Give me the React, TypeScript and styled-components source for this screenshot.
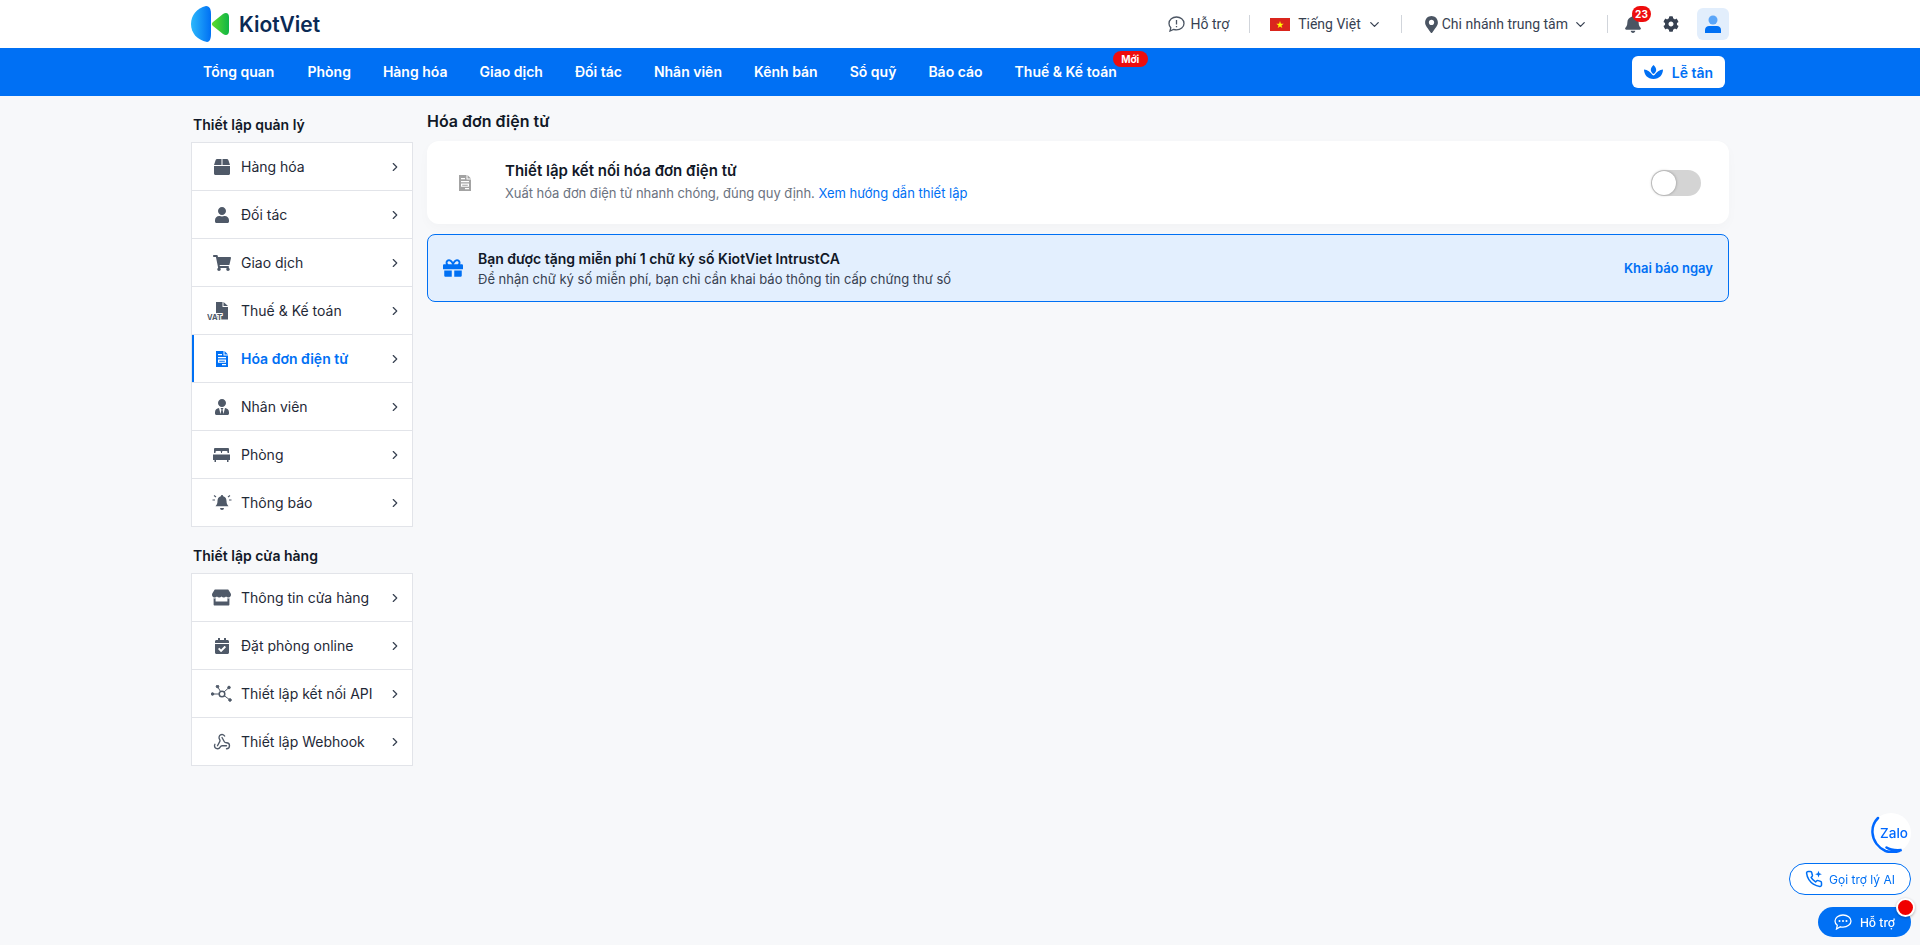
import React from "react";
import styled, { createGlobalStyle } from "styled-components";
import { ChevronDown, ChevronRight, Webhook } from "lucide-react";
import { FaBox, FaUser, FaShoppingCart, FaUserTie, FaStore, FaCalendarCheck, FaBell, FaCog, FaMapMarkerAlt, FaGift } from "react-icons/fa";

const Global = createGlobalStyle`
  * { box-sizing: border-box; }
  html, body { margin: 0; padding: 0; background: #f7f8fa; }
  body { font-family: Inter, "Noto Sans", sans-serif; color: #1f2937; font-size: 14px; }
`;

const Shell = styled.div`
  width: 1538px;
  margin: 0 auto;
  display: flex;
  align-items: center;
`;
const TopBar = styled.header`
  height: 48px;
  background: #fff;
`;
const TopInner = styled(Shell)`
  height: 48px;
  justify-content: space-between;
`;
const Logo = styled.div`
  display: flex;
  align-items: center;
  gap: 10px;
  font-size: 21px;
  font-weight: 600;
  color: #0b2a55;
`;
const TopTools = styled.div`
  display: flex;
  align-items: center;
  font-family: Roboto, sans-serif;
  font-size: 14px;
  color: #374151;
`;
const Tool = styled.div<{ $gap?: number }>`
  display: flex;
  align-items: center;
  gap: ${(p) => p.$gap ?? 6}px;
`;
const Divider = styled.span<{ $l: number; $r: number }>`
  width: 1px;
  height: 18px;
  background: #d1d5db;
  margin: 0 ${(p) => p.$r}px 0 ${(p) => p.$l}px;
`;
const Pin = styled(FaMapMarkerAlt)`
  color: #4b5563;
  margin-right: -3px;
`;
const BellWrap = styled.div`
  position: relative;
  display: flex;
  width: 18px;
  margin-right: 21px;
  color: #4b5563;
`;
const Count = styled.span`
  position: absolute;
  left: 8px;
  top: -9px;
  min-width: 19px;
  height: 16px;
  border-radius: 8px;
  background: #ee0d0d;
  color: #fff;
  font: 700 10px/16px Inter, sans-serif;
  text-align: center;
`;
const Avatar = styled.div`
  width: 32px;
  height: 32px;
  margin-left: 18px;
  border-radius: 6px;
  background: #e2eefc;
  display: flex;
  align-items: center;
  justify-content: center;
`;
const NavBar = styled.nav`
  height: 48px;
  background: #0070f4;
`;
const NavInner = styled(Shell)`
  height: 48px;
  justify-content: space-between;
  padding-left: 12px;
  padding-right: 4px;
`;
const NavList = styled.div`
  display: flex;
  gap: 32px;
`;
const NavItem = styled.a`
  position: relative;
  color: #fff;
  font-size: 14px;
  font-weight: 600;
  line-height: 20px;
  &:first-child { margin-right: 1px; }
`;
const NewBadge = styled.span`
  position: absolute;
  right: -31px;
  top: -11px;
  height: 16px;
  width: 35px;
  border-radius: 8px;
  background: #ee0d0d;
  color: #fff;
  font-size: 10px;
  font-weight: 700;
  line-height: 16px;
  text-align: center;
`;
const FrontDesk = styled.button`
  width: 93px;
  height: 32px;
  border: 0;
  border-radius: 6px;
  background: #fff;
  color: #0070f4;
  font: 600 14px Inter, sans-serif;
  display: flex;
  align-items: center;
  justify-content: center;
  gap: 9px;
`;
const Body = styled(Shell)`
  align-items: flex-start;
  gap: 14px;
`;
const Side = styled.aside`
  width: 222px;
  flex: none;
`;
const SideTitle = styled.div<{ $top: number }>`
  margin: ${(p) => p.$top}px 0 7px 2px;
  height: 20px;
  font-size: 14px;
  font-weight: 600;
  line-height: 20px;
  color: #111827;
`;
const SideList = styled.div`
  background: #fff;
  border: 1px solid #e2e4e9;
  border-bottom: 0;
`;
const Row = styled.div<{ $active?: boolean }>`
  height: 48px;
  display: flex;
  align-items: center;
  border-bottom: 1px solid #e2e4e9;
  padding-right: 10px;
  color: ${(p) => (p.$active ? "#0070f4" : "#1f2937")};
  font-weight: ${(p) => (p.$active ? 600 : 400)};
  box-shadow: ${(p) => (p.$active ? "inset 2px 0 0 #0070f4" : "none")};
  svg.arrow { color: #374151; }
`;
const RowIcon = styled.span<{ $active?: boolean }>`
  width: 49px;
  padding-left: 10px;
  flex: none;
  height: 20px;
  display: flex;
  align-items: center;
  justify-content: center;
  color: ${(p) => (p.$active ? "#0070f4" : "#4f5968")};
`;
const RowLabel = styled.span`
  flex: 1;
`;
const Main = styled.main`
  flex: 1;
  min-width: 0;
`;
const MainTitle = styled.h1`
  margin: 15px 0 10px;
  font-size: 16px;
  font-weight: 600;
  line-height: 20px;
  color: #111827;
`;
const Card = styled.section`
  height: 83px;
  background: #fff;
  border-radius: 12px;
  box-shadow: 0 4px 12px rgba(0, 0, 0, 0.025);
  display: flex;
  align-items: center;
  padding: 0 28px 0 26px;
`;
const CardIcon = styled.span`
  width: 52px;
  padding-left: 6px;
  display: flex;
  color: #a3a3a3;
`;
const CardText = styled.div`
  flex: 1;
  padding-bottom: 2px;
`;
const CardTitle = styled.div`
  font-size: 15px;
  font-weight: 600;
  line-height: 20px;
  color: #111827;
  margin-bottom: 3px;
`;
const CardSub = styled.div`
  font-size: 13px;
  line-height: 18px;
  color: #6b7280;
  letter-spacing: -0.04px;
  a { color: #0070f4; letter-spacing: 0; }
`;
const Toggle = styled.div`
  width: 50px;
  height: 26px;
  border-radius: 13px;
  background: #d4d4d4;
  padding: 1px;
  &::before {
    content: "";
    display: block;
    width: 24px;
    height: 24px;
    border-radius: 50%;
    background: #fff;
    box-shadow: 0 0 3px rgba(0, 0, 0, 0.35);
  }
`;
const Banner = styled.section`
  height: 68px;
  margin-top: 10px;
  border: 1px solid #0070f4;
  border-radius: 8px;
  background: #e3effe;
  display: flex;
  align-items: center;
  padding: 0 15px;
`;
const GiftIcon = styled.span`
  width: 35px;
  display: flex;
  color: #0070f4;
`;
const BannerText = styled.div`
  flex: 1;
  padding-top: 1px;
`;
const BannerTitle = styled.div`
  font-size: 14px;
  font-weight: 600;
  line-height: 20px;
  color: #111827;
`;
const BannerSub = styled.div`
  font-size: 13px;
  line-height: 20px;
  color: #374151;
`;
const BannerAction = styled.a`
  font-size: 13px;
  font-weight: 600;
  color: #0070f4;
`;
const Floating = styled.div`
  position: fixed;
  right: 9px;
  bottom: 8px;
  display: flex;
  flex-direction: column;
  align-items: flex-end;
`;
const Zalo = styled.div`
  position: relative;
  width: 40px;
  height: 40px;
  margin-bottom: 10px;
  padding-left: 6px;
  border-radius: 50%;
  background: #fff;
  color: #0068ff;
  font: 500 13.500px/40px Inter, sans-serif;
  text-align: center;
  svg { position: absolute; left: 0; top: 0; }
`;
const AiPill = styled.div`
  width: 122px;
  height: 32px;
  border: 1px solid #0070f4;
  border-radius: 16px;
  background: #fff;
  color: #0070f4;
  font-size: 12px;
  display: flex;
  align-items: center;
  justify-content: center;
  gap: 6px;
  margin-bottom: 12px;
`;
const HelpPill = styled.div`
  position: relative;
  width: 93px;
  height: 30px;
  border-radius: 15px;
  background: #0070f4;
  color: #fff;
  font-size: 12px;
  font-weight: 500;
  display: flex;
  align-items: center;
  justify-content: center;
  gap: 8px;
`;
const RedDot = styled.span`
  position: absolute;
  right: -4px;
  top: -9px;
  width: 19px;
  height: 19px;
  border-radius: 50%;
  background: #f00000;
  border: 2px solid #fff;
  box-shadow: 0 1px 3px rgba(0, 0, 0, 0.3);
`;
const FlagBox = styled.svg`
  margin-right: 2px;
`;

const InvoiceGlyph = ({ size = 16 }: { size?: number }) => (
  <svg width={size * 0.75} height={size} viewBox="0 0 12 16" fill="currentColor">
    <path fillRule="evenodd" d="M0 0h7.500v4.500H12V16H0zM8.500 0 12 3.500H8.500zM2 3v1.200h4V3zM2 6v1.200h8V6zM2 8.600v3.200h8V8.600zM3.200 9.800h5.600v.9H3.200zM6 13v1.200h4V13z" />
  </svg>
);
const VatIcon = () => (
  <svg width="29" height="20" viewBox="0 0 29 20" fill="currentColor">
    <path d="M9 1h6.500v5H21v12.500h-12zM16.500 1 21 5h-4.500z" />
    <text x="0" y="19" fontFamily="Inter, sans-serif" fontSize="7.500" fontWeight="700" stroke="#fff" strokeWidth="2" paintOrder="stroke">VAT</text>
  </svg>
);
const BedIcon = () => (
  <svg width="17" height="14" viewBox="0 0 17 14" fill="currentColor">
    <path d="M2 0h13a1 1 0 0 1 1 1v4h-1.500V4a1 1 0 0 0-1-1H10a1 1 0 0 0-1 1v1H8V4a1 1 0 0 0-1-1H3.500a1 1 0 0 0-1 1v1H1V1a1 1 0 0 1 1-1zM0 6.500h17V12h-1.500v2H14v-2H3v2H1.500v-2H0z" />
  </svg>
);
const AlarmIcon = () => (
  <svg width="20" height="18" viewBox="0 0 20 18" fill="currentColor" stroke="none">
    <path d="M10 1a1.200 1.200 0 0 1 1.200 1.200c2.400.5 3.300 2.500 3.300 4.800 0 3 1 4 2 5.300H3.500c1-1.300 2-2.300 2-5.300 0-2.300.9-4.300 3.300-4.800A1.200 1.200 0 0 1 10 1zM8 14h4a2 2 0 0 1-4 0z" />
    <path d="M.5 6h2.500M17 6h2.500M2 1.500l2 1.500M18 1.500l-2 1.500" stroke="currentColor" strokeWidth="1.100" />
  </svg>
);
const ApiIcon = () => (
  <svg width="21" height="17" viewBox="0 0 21 17" fill="currentColor" stroke="currentColor">
    <circle cx="11" cy="9" r="2.800" fill="none" strokeWidth="1.500" />
    <circle cx="1.500" cy="9" r="1.300" />
    <circle cx="6.500" cy="1.500" r="1.300" />
    <circle cx="18" cy="2.500" r="1.300" />
    <circle cx="19" cy="15" r="1.300" />
    <path d="M1.500 9H8M6.500 1.500 9.500 6.500M18 2.500 13 7M19 15l-6-4.500" strokeWidth="1" />
  </svg>
);
const LotusIcon = () => (
  <svg width="19" height="14" viewBox="0 0 19 14" fill="#0070f4">
    <path d="M9.500 0c1.800 1.500 2.700 3.200 2.700 5 0 1.300-.9 3-2.700 4-1.800-1-2.700-2.700-2.700-4 0-1.800.9-3.500 2.700-5zM0 4.500c3.500 0 6.500 2.500 8.500 5.500l1 .5 1-.5c2-3 5-5.500 8.500-5.500 0 5-3.500 9.500-9.500 9.500S0 9.500 0 4.500z" />
  </svg>
);
const LogoMark = () => (
  <svg width="38" height="38" viewBox="0 0 38 38">
    <defs>
      <linearGradient id="lb" x1="0" x2="1" y1="0" y2="0">
        <stop offset="0" stopColor="#2cb8fb" />
        <stop offset="1" stopColor="#0070f4" />
      </linearGradient>
      <linearGradient id="lg" x1="0" x2="1" y1="0" y2="0">
        <stop offset="0" stopColor="#5fdc2d" />
        <stop offset="1" stopColor="#10b545" />
      </linearGradient>
    </defs>
    <path d="M15 1C6 3 0 10 0 19c0 9 6 16 16 18 3 0 4-4 4-8V9c0-4-1-8-5-8z" fill="url(#lb)" />
    <path d="M22 17l10-8c3-2 6-1 6 3v14c0 4-3 5-6 3l-10-8c-1.500-1-1.500-3 0-4z" fill="url(#lg)" />
  </svg>
);
const VnFlag = () => (
  <FlagBox width="20" height="13" viewBox="0 0 20 13">
    <rect width="20" height="13" fill="#da251d" />
    <path d="M10 3l.9 2.700h2.800l-2.300 1.700.9 2.700L10 8.400l-2.300 1.700.9-2.700-2.300-1.700h2.800z" fill="#ff0" />
  </FlagBox>
);
const SupportGlyph = () => (
  <svg width="17" height="16" viewBox="0 0 17 16" fill="none" stroke="#4b5563" strokeWidth="1.300">
    <path d="M8.500 1C4.500 1 1 3.700 1 7.500c0 1.700.7 3.100 1.800 4.200L2 15l3.500-1.600c.9.300 2 .5 3 .5 4 0 7.500-2.700 7.500-6.400S12.500 1 8.500 1z" />
    <path d="M8.500 4v4.500M8.500 10v1.300" />
  </svg>
);
const UserAvatar = () => (
  <svg width="16" height="18" viewBox="0 0 16 18" fill="#0070f4">
    <circle cx="8" cy="5" r="4.500" fill="#5aa5f8" />
    <path d="M0 18v-3c0-2.500 2-4 4-4h8c2 0 4 1.500 4 4v3z" />
  </svg>
);
const ZaloRing = () => (
  <svg width="40" height="40" viewBox="0 0 40 40" fill="none" stroke="#0068ff" strokeWidth="2.500">
    <path d="M7 5C3 9 1 14 1.500 20c.5 8 6 15 13 18 6 2 12 1 16-1-6 .5-12-.5-15-2.500" strokeLinecap="round" />
  </svg>
);
const PhoneSpark = () => (
  <svg width="18" height="18" viewBox="0 0 24 24" fill="none" stroke="currentColor" strokeWidth="2" strokeLinecap="round" strokeLinejoin="round">
    <path d="M22 16.920v3a2 2 0 0 1-2.180 2 19.790 19.790 0 0 1-8.630-3.070 19.500 19.500 0 0 1-6-6 19.790 19.790 0 0 1-3.070-8.670A2 2 0 0 1 4.110 2h3a2 2 0 0 1 2 1.720 12.840 12.840 0 0 0 .7 2.810 2 2 0 0 1-.45 2.110L8.090 9.910a16 16 0 0 0 6 6l1.270-1.270a2 2 0 0 1 2.110-.45 12.840 12.840 0 0 0 2.810.7A2 2 0 0 1 22 16.920z" />
    <path d="M18 1l1.200 3.300L22.500 5.500l-3.300 1.200L18 10l-1.200-3.300L13.500 5.500l3.300-1.200z" fill="currentColor" stroke="none" />
  </svg>
);
const ChatDots = () => (
  <svg width="18" height="16" viewBox="0 0 18 16" fill="none" stroke="#fff" strokeWidth="1.300">
    <path d="M9 1C4.600 1 1 3.600 1 7c0 1.700.9 3.200 2.300 4.300L2.500 15l3.900-2.200c.8.200 1.700.3 2.600.3 4.400 0 8-2.700 8-6.100S13.400 1 9 1z" />
    <circle cx="5.500" cy="7" r="1" fill="#fff" stroke="none" />
    <circle cx="9" cy="7" r="1" fill="#fff" stroke="none" />
    <circle cx="12.500" cy="7" r="1" fill="#fff" stroke="none" />
  </svg>
);

const chevron = <ChevronRight className="arrow" size={14} strokeWidth={2} />;
const manage: [React.ReactNode, string, boolean?][] = [
  [<FaBox size={16} />, "Hàng hóa"],
  [<FaUser size={16} />, "Đối tác"],
  [<FaShoppingCart size={18} />, "Giao dịch"],
  [<VatIcon />, "Thuế & Kế toán"],
  [<InvoiceGlyph />, "Hóa đơn điện tử", true],
  [<FaUserTie size={16} />, "Nhân viên"],
  [<BedIcon />, "Phòng"],
  [<AlarmIcon />, "Thông báo"],
];
const store: [React.ReactNode, string][] = [
  [<FaStore size={19} />, "Thông tin cửa hàng"],
  [<FaCalendarCheck size={16} />, "Đặt phòng online"],
  [<ApiIcon />, "Thiết lập kết nối API"],
  [<Webhook size={18} strokeWidth={1.800} />, "Thiết lập Webhook"],
];
const navs = ["Tổng quan", "Phòng", "Hàng hóa", "Giao dịch", "Đối tác", "Nhân viên", "Kênh bán", "Sổ quỹ", "Báo cáo"];

export default function App() {
  return (
    <>
      <Global />
      <TopBar>
        <TopInner>
          <Logo>
            <LogoMark />
            KiotViet
          </Logo>
          <TopTools>
            <Tool>
              <SupportGlyph />
              Hỗ trợ
            </Tool>
            <Divider $l={20} $r={20} />
            <Tool $gap={6}>
              <VnFlag />
              Tiếng Việt
              <ChevronDown size={15} strokeWidth={2} />
            </Tool>
            <Divider $l={19} $r={21} />
            <Tool $gap={5}>
              <Pin size={17} />
              Chi nhánh trung tâm
              <ChevronDown size={15} strokeWidth={2} />
            </Tool>
            <Divider $l={19} $r={16} />
            <BellWrap>
              <FaBell size={18} />
              <Count>23</Count>
            </BellWrap>
            <FaCog size={16} color="#374151" />
            <Avatar>
              <UserAvatar />
            </Avatar>
          </TopTools>
        </TopInner>
      </TopBar>
      <NavBar>
        <NavInner>
          <NavList>
            {navs.map((n) => (
              <NavItem key={n}>{n}</NavItem>
            ))}
            <NavItem>
              Thuế &amp; Kế toán
              <NewBadge>Mới</NewBadge>
            </NavItem>
          </NavList>
          <FrontDesk>
            <LotusIcon />
            Lễ tân
          </FrontDesk>
        </NavInner>
      </NavBar>
      <Body>
        <Side>
          <SideTitle $top={19}>Thiết lập quản lý</SideTitle>
          <SideList>
            {manage.map(([icon, label, active]) => (
              <Row key={label} $active={active}>
                <RowIcon $active={active}>{icon}</RowIcon>
                <RowLabel>{label}</RowLabel>
                {chevron}
              </Row>
            ))}
          </SideList>
          <SideTitle $top={19}>Thiết lập cửa hàng</SideTitle>
          <SideList>
            {store.map(([icon, label]) => (
              <Row key={label}>
                <RowIcon>{icon}</RowIcon>
                <RowLabel>{label}</RowLabel>
                {chevron}
              </Row>
            ))}
          </SideList>
        </Side>
        <Main>
          <MainTitle>Hóa đơn điện tử</MainTitle>
          <Card>
            <CardIcon>
              <InvoiceGlyph />
            </CardIcon>
            <CardText>
              <CardTitle>Thiết lập kết nối hóa đơn điện tử</CardTitle>
              <CardSub>
                Xuất hóa đơn điện tử nhanh chóng, đúng quy định. <a>Xem hướng dẫn thiết lập</a>
              </CardSub>
            </CardText>
            <Toggle />
          </Card>
          <Banner>
            <GiftIcon>
              <FaGift size={20} />
            </GiftIcon>
            <BannerText>
              <BannerTitle>Bạn được tặng miễn phí 1 chữ ký số KiotViet IntrustCA</BannerTitle>
              <BannerSub>Để nhận chữ ký số miễn phí, bạn chỉ cần khai báo thông tin cấp chứng thư số</BannerSub>
            </BannerText>
            <BannerAction>Khai báo ngay</BannerAction>
          </Banner>
        </Main>
      </Body>
      <Floating>
        <Zalo>
          <ZaloRing />
          Zalo
        </Zalo>
        <AiPill>
          <PhoneSpark />
          Gọi trợ lý AI
        </AiPill>
        <HelpPill>
          <ChatDots />
          Hỗ trợ
          <RedDot />
        </HelpPill>
      </Floating>
    </>
  );
}
